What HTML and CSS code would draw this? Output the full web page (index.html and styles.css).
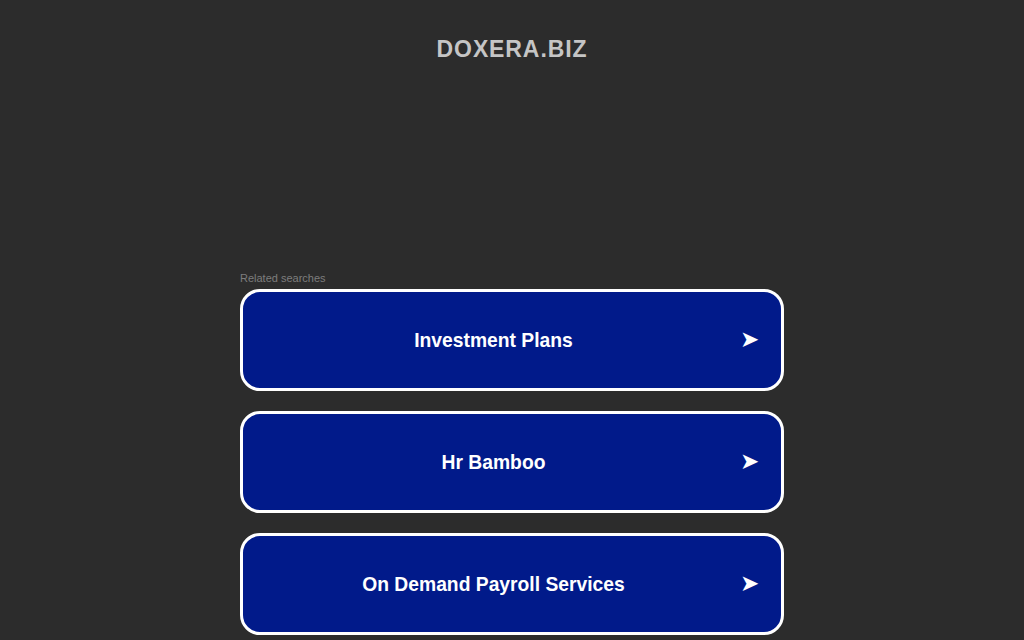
FILE: index.html
```html
<!DOCTYPE html>
<html>
<head>
<meta charset="utf-8">
<title>doxera.biz</title>
<link rel="stylesheet" href="styles.css">
</head>
<body>
<div class="page">
  <header class="header">
    <h1 class="domain">DOXERA.BIZ</h1>
  </header>
  <main class="content">
    <div class="related">Related searches</div>
    <ul class="links">
      <li><a class="link" href="#"><span class="label">Investment Plans</span><span class="arrow">➤</span></a></li>
      <li><a class="link" href="#"><span class="label">Hr Bamboo</span><span class="arrow">➤</span></a></li>
      <li><a class="link" href="#"><span class="label">On Demand Payroll Services</span><span class="arrow">➤</span></a></li>
    </ul>
  </main>
</div>
</body>
</html>
```
FILE: styles.css
```css
html, body {
  margin: 0;
  padding: 0;
  background: #2c2c2c;
  height: 100%;
  overflow: hidden;
}
body {
  font-family: "Liberation Sans", Arial, sans-serif;
}
.page {
  display: flex;
  flex-direction: column;
  align-items: center;
}
.header {
  height: 271px;
  width: 100%;
  display: flex;
  justify-content: center;
}
.domain {
  margin: 36px 0 0;
  font-size: 23px;
  line-height: 26px;
  letter-spacing: 0.9px;
  font-weight: bold;
  color: #c5c5c5;
}
.content {
  width: 544px;
}
.related {
  font-size: 11px;
  line-height: 14px;
  color: #7d7d7d;
  margin-bottom: 4px;
}
.links {
  list-style: none;
  margin: 0;
  padding: 0;
  display: flex;
  flex-direction: column;
  gap: 20px;
}
.link {
  box-sizing: border-box;
  height: 102px;
  display: flex;
  align-items: center;
  border: 3px solid #ffffff;
  border-radius: 20px;
  background: #011a8a;
  color: #ffffff;
  text-decoration: none;
}
.label {
  flex: 1;
  text-align: center;
  font-size: 19.3px;
  font-weight: bold;
  padding-top: 2px;
}
.arrow {
  font-family: "DejaVu Sans", sans-serif;
  font-size: 23px;
  width: 41px;
  margin-left: -4px;
  padding-bottom: 2px;
}
```
